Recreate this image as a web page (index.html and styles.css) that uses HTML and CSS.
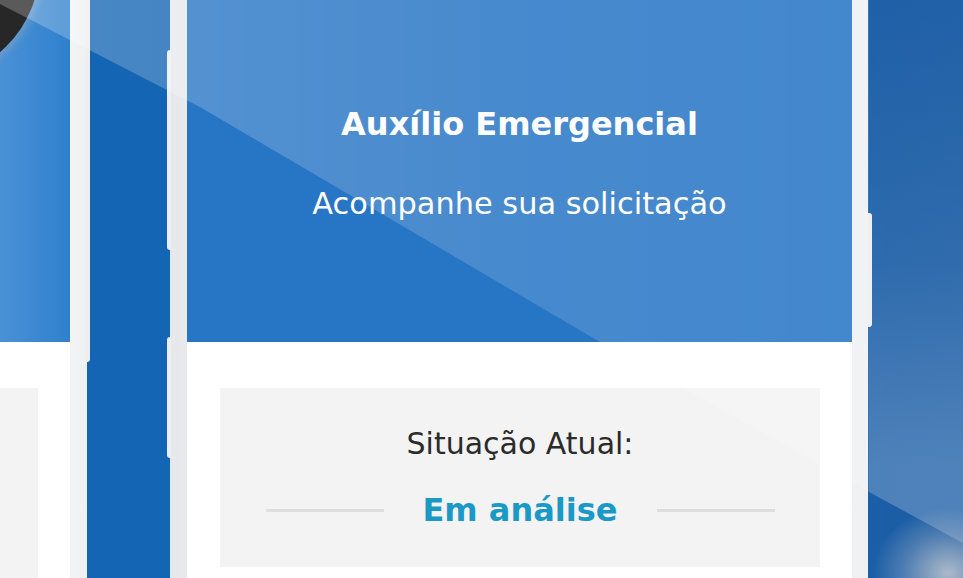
FILE: index.html
```html
<!DOCTYPE html>
<html lang="pt-BR">
<head>
    <meta charset="UTF-8">
    <meta name="viewport" content="width=device-width, initial-scale=1.0">
    <title>Auxílio Emergencial</title>
    <link rel="stylesheet" href="styles.css">
</head>
<body>
    <div class="scene">
        <div class="phone phone-side">
            <span class="button button-side"></span>
            <div class="screen">
                <div class="header"></div>
                <div class="content">
                    <div class="status-card"></div>
                </div>
            </div>
        </div>

        <div class="phone phone-main">
            <span class="button button-left-top"></span>
            <span class="button button-left"></span>
            <span class="button button-right"></span>
            <div class="screen">
                <header class="header">
                    <h1 class="title">Auxílio Emergencial</h1>
                    <p class="subtitle">Acompanhe sua solicitação</p>
                </header>
                <div class="content">
                    <div class="status-card">
                        <div class="status-label">Situação Atual:</div>
                        <div class="status-row">
                            <span class="rule"></span>
                            <strong class="status-value">Em análise</strong>
                            <span class="rule"></span>
                        </div>
                    </div>
                </div>
            </div>
        </div>

        <!-- things in front of the phones: blurred object, light reflection -->
        <div class="blob"></div>
        <div class="glare"></div>
        <div class="glare glare-right"></div>
        <div class="glow"></div>
    </div>
</body>
</html>
```

FILE: styles.css
```css
body {
    margin: 0;
    padding: 0;
    font-family: "DejaVu Sans", Lato, Arial, sans-serif;
    overflow: hidden;
}

.scene {
    position: relative;
    display: flex;
    align-items: stretch;
    width: 963px;
    height: 578px;
    overflow: hidden;
    background: linear-gradient(90deg, #1465b5 0%, #1562b0 85%, #1c5ea6 92%, #1e5fa6 100%);
}

.phone {
    position: relative;
    flex: none;
    display: flex;
    background: linear-gradient(90deg, #e6e8eb, #fbfbfb 40%, #eff0f2);
}

.phone-side {
    width: 87px;
    padding-right: 17px;
    box-sizing: border-box;
    margin-right: 83px;
}

.phone-main {
    width: 698px;
    padding: 0 16px 0 17px;
    box-sizing: border-box;
}

.button {
    position: absolute;
    width: 4px;
    background: #eceef1;
}

.button-side {
    right: -3px;
    top: 0;
    height: 362px;
    border-radius: 0 0 3px 0;
}

.button-left-top {
    left: -3px;
    top: 50px;
    height: 200px;
    border-radius: 3px 0 0 3px;
}

.button-left {
    left: -3px;
    top: 337px;
    height: 121px;
    border-radius: 3px 0 0 3px;
}

.button-right {
    right: -4px;
    top: 213px;
    height: 114px;
    border-radius: 0 3px 3px 0;
}

.screen {
    flex: 1;
    display: flex;
    flex-direction: column;
    background: #fff;
}

.header {
    height: 342px;
    flex: none;
    box-sizing: border-box;
    background: #2775c5;
    color: #fff;
    text-align: center;
}

.phone-side .header {
    background: linear-gradient(90deg, #4a92d6, #2f80cd);
}

.phone-main .header {
    padding-top: 104px;
}

.title {
    margin: 0;
    font-size: 32px;
    line-height: 40px;
    font-weight: 700;
}

.subtitle {
    margin: 40px 0 0;
    font-size: 30.4px;
    line-height: 40px;
    font-weight: 400;
}

.content {
    flex: 1;
    padding: 46px 32px 11px 33px;
}

.phone-side .content {
    padding: 46px 32px 0 0;
}

.status-card {
    height: 100%;
    box-sizing: border-box;
    background: #f3f3f3;
    text-align: center;
    padding-top: 38px;
}

.status-label {
    font-size: 30px;
    line-height: 36px;
    color: #2b2b2b;
}

.status-row {
    display: flex;
    align-items: center;
    justify-content: center;
    gap: 39px;
    margin-top: 28px;
}

.rule {
    width: 118px;
    height: 3px;
    background: #dedede;
}

.status-value {
    font-size: 32px;
    line-height: 40px;
    font-weight: 700;
    color: #1b99c6;
}

.blob {
    position: absolute;
    left: -190px;
    top: -150px;
    width: 230px;
    height: 230px;
    border-radius: 50%;
    background: #272727;
    box-shadow: 0 0 8px 3px rgba(150, 170, 195, 0.55);
}

.glare {
    position: absolute;
    top: 0;
    left: 0;
    width: 869px;
    height: 578px;
    pointer-events: none;
    background: linear-gradient(90deg, rgba(255, 255, 255, 0.24), rgba(255, 255, 255, 0.15) 60%, rgba(255, 255, 255, 0.13));
    clip-path: polygon(0 0, 869px 0, 869px 492px, 600px 342px, 200px 107px, 0 4px);
}

.glare-right {
    left: 869px;
    width: 94px;
    background: linear-gradient(180deg, rgba(255, 255, 255, 0.01), rgba(255, 255, 255, 0.08) 45%, rgba(255, 255, 255, 0.22) 80%);
    clip-path: polygon(0 0, 100% 0, 100% 543px, 0 492px);
}

.glow {
    position: absolute;
    right: -60px;
    bottom: -60px;
    width: 150px;
    height: 130px;
    border-radius: 50%;
    background: radial-gradient(closest-side, rgba(220, 216, 212, 0.75), rgba(190, 195, 205, 0.3) 60%, rgba(190, 195, 205, 0));
}
```
